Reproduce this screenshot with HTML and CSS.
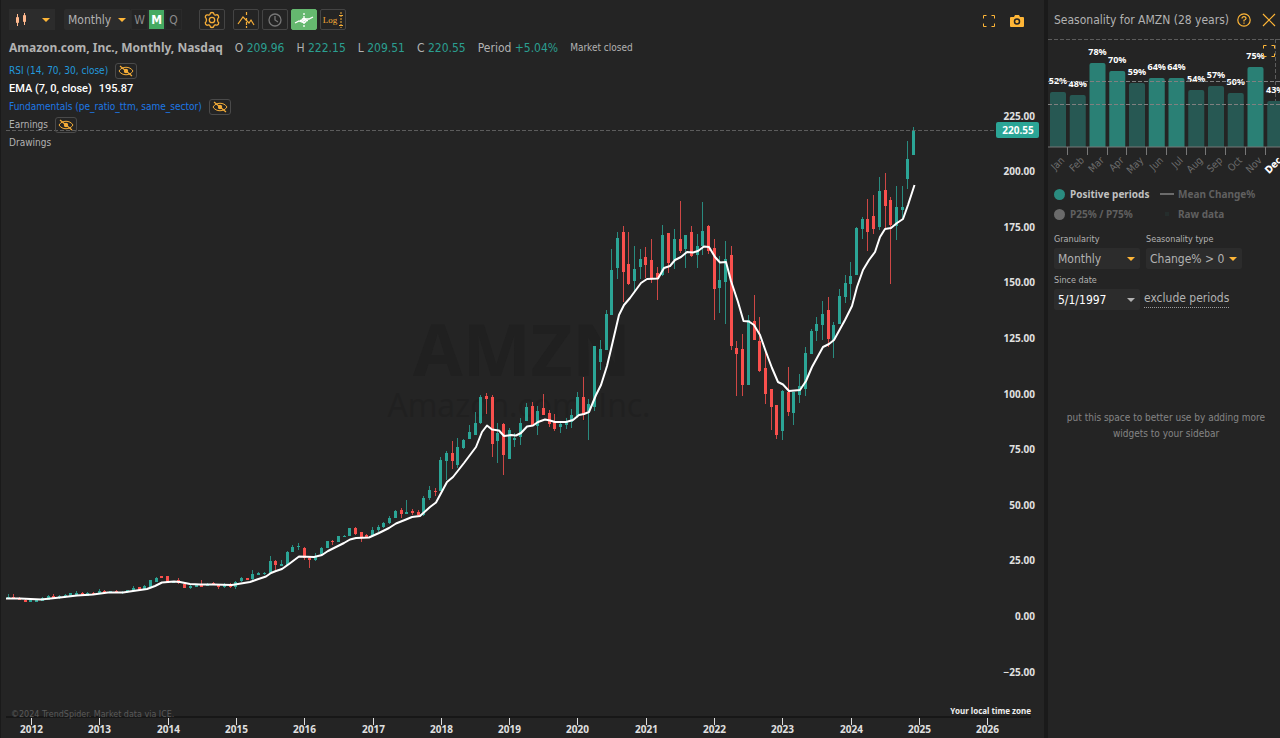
FILE: index.html
```html
<!DOCTYPE html>
<html lang="en">
<head>
<meta charset="utf-8">
<title>AMZN Monthly</title>
<link rel="stylesheet" href="styles.css">
</head>
<body>
<svg class="defs" aria-hidden="true">
  <symbol id="eye-off" viewBox="0 0 16 12">
    <path d="M1 6C4 1 12 1 15 6C12 11 4 11 1 6Z" fill="none" stroke="currentColor"/>
    <circle cx="8" cy="6" r="2.2" fill="currentColor"/>
    <path d="M2 1L14 11" stroke="currentColor" stroke-width="1.2"/>
  </symbol>
  <symbol id="expand" viewBox="0 0 14 14">
    <path d="M1.500 4.500V1.500H4.500M9.500 1.500h3v3M12.500 9.500v3H9.500M4.500 12.500H1.500V9.500" fill="none" stroke="currentColor"/>
  </symbol>
</svg>
<div class="app">
  <main class="chart">
    <svg class="plot" id="plot" viewBox="0 0 1044 738" preserveAspectRatio="xMinYMin meet" role="img" aria-label="AMZN monthly candlestick chart">
      <text class="mark mark-symbol" x="522" y="376">AMZN</text>
      <text class="mark mark-name" x="519" y="417">Amazon.com, Inc.</text>
      <path class="guide" d="M6 130.5H997"/>
      <g id="candles"></g>
      <polyline id="ema" class="ema" points="6,598.5 20,598.5 41,599.5 60,597.5 77,595.5 93,594.5 108,592.5 123,592.5 133,591 147,589 155,586 162,582.5 174,581.5 180,582 190,584 200,584.5 213,584.5 232,585 241,583.5 250,582 257,579.5 266,576.5 271,573 276,571 282,569 289,564 299,556.5 314,557 322,555 328,551 344,543 350,539.5 356,538 369,537.5 379,533 389,528 396,523.5 406,519.5 412,517 420,516 430,507 436,502.5 447,482 453,477 464,463 476,447 482,432 487,425.5 492,429.5 499,430.5 504,436 511,435 516,435.5 521,433 527,426.5 533,425.5 538,422 545,419.5 550,420.5 555,422 566,422 573,420 579,415 584,414 589,412 596,395 601,385 607,366 612,345 619,315 624,305 630,298 641,283 647,279 658,278.5 664,268 670,266 675,260 681,257 687,252 693,252.5 698,251 704,246.5 709,247 715,257 720,262.5 726,262 731,281 738,302 743.5,321 749,321.5 754,325 760,335 766,352 772,368 778,382 783,384.5 789,391 800,390 806,381 812,367 823,347 829,344 834,340 845,320 852,306 857,287 863,270 869,260 875,252 880,237 885,229 891,228 897,223 903,219 908,205 914.5,185"/>
      <g id="prices" class="axis-price"></g>
      <rect class="tag" x="996" y="122" width="43" height="16" rx="2"/>
      <text class="tag-text" x="1018" y="134">220.55</text>
      <path class="baseline" d="M6 717H1031"/>
      <g id="years" class="axis-year"></g>
      <text class="copyright" x="11" y="717">©2024 TrendSpider. Market data via ICE.</text>
      <text class="zone" x="1031" y="714">Your local time zone</text>
    </svg>
    <div class="overlay">
      <header class="toolbar">
        <button class="btn kind" aria-label="Chart type">
          <svg width="14" height="14" viewBox="0 0 14 14" fill="#ffb98e" stroke="#ffb98e"><path d="M3.5 1v12M10.500 0v12"/><path d="M2.500 4.500h2v5h-2zM9.500 2.500h2v6h-2z"/></svg>
          <span class="caret"></span>
        </button>
        <div class="period">
          <span class="select-box"><select class="select" aria-label="Timeframe"><option>Monthly</option><option>Weekly</option></select></span>
          <button class="step">W</button><button class="step step-on">M</button><button class="step">Q</button>
        </div>
        <button class="tool tool-gear" aria-label="Settings"><svg width="18" height="18" viewBox="0 0 18 18" fill="none" stroke="currentColor" stroke-width="1.3" stroke-linejoin="round"><path d="M7 3.200Q7.200 1.500 9 1.500T11 3.200Q11.500 4.200 12.800 4Q14.500 3.300 15.400 4.900T14.900 7.400Q14 9 14.900 10.600Q16.300 11.600 15.400 13.100T12.800 14Q11.500 13.800 11 14.800Q10.800 16.500 9 16.500T7 14.800Q6.500 13.800 5.200 14Q3.500 14.700 2.600 13.100T3.100 10.600Q4 9 3.100 7.400Q1.700 6.400 2.600 4.900T5.200 4Q6.500 4.200 7 3.200Z"/><circle cx="9" cy="9" r="2.700"/></svg></button>
        <div class="tools">
          <button class="tool" aria-label="Extended line"><svg width="18" height="18" viewBox="0 0 18 18" fill="none" stroke="currentColor" stroke-width="1.200"><path d="M1 13L6 6l6 6 2-3 3 5"/><path d="M9.500 1v4M9.500 7v10" stroke-dasharray="3 1"/></svg></button>
          <button class="tool tool-mute" aria-label="Time"><svg width="16" height="16" viewBox="0 0 16 16" fill="none" stroke="currentColor" stroke-width="1.300"><circle cx="8" cy="8" r="6"/><path d="M8 4v4l3 2"/></svg></button>
          <button class="tool tool-on" aria-label="Crosshair"><svg width="20" height="18" viewBox="0 0 20 18" fill="none" stroke="currentColor" stroke-width="1.300"><path d="M1 12l4-2 3 1 4-3 3 0 4-2"/><path d="M10 2v14M6 9.500h8" stroke-dasharray="2 1"/><circle cx="10" cy="9.500" r="2"/></svg></button>
          <button class="tool tool-log" aria-label="Logarithmic scale">Log<svg width="4" height="16" viewBox="0 0 4 16" stroke="currentColor"><path d="M2 0v16" stroke-dasharray="2 1"/><path d="M0 3.500h4M0 13.500h4"/></svg></button>
        </div>
        <div class="corner">
          <button class="plain" aria-label="Full screen"><svg width="14" height="14"><use href="#expand"/></svg></button>
          <button class="plain" aria-label="Snapshot"><svg width="14" height="12" viewBox="0 0 14 12"><path d="M1 2h3l1-2h4l1 2h3q1 0 1 1v8q0 1-1 1H1q-1 0-1-1V3q0-1 1-1z" fill="currentColor"/><circle cx="7" cy="6.500" r="2.500" fill="none" stroke="#242424" stroke-width="1.500"/></svg></button>
        </div>
      </header>
      <div class="quote">
        <strong class="title">Amazon.com, Inc., Monthly, Nasdaq</strong>
        <span>O <b>209.96</b></span><span>H <b>222.15</b></span><span>L <b>209.51</b></span><span>C <b>220.55</b></span><span>Period <b>+5.04%</b></span><span class="state">Market closed</span>
      </div>
      <ul class="studies">
        <li class="rsi">RSI (14, 70, 30, close)<button class="eye" aria-label="Show RSI"><svg width="16" height="12"><use href="#eye-off"/></svg></button></li>
        <li class="avg">EMA (7, 0, close) <span>195.87</span></li>
        <li class="fund">Fundamentals (pe_ratio_ttm, same_sector)<button class="eye" aria-label="Show fundamentals"><svg width="16" height="12"><use href="#eye-off"/></svg></button></li>
        <li>Earnings<button class="eye" aria-label="Show earnings"><svg width="16" height="12"><use href="#eye-off"/></svg></button></li>
        <li>Drawings</li>
      </ul>
    </div>
  </main>
  <aside class="side">
    <header class="side-head">
      <h2 class="side-title">Seasonality for AMZN (28 years)</h2>
      <button class="plain" aria-label="Help"><svg width="14" height="14" viewBox="0 0 14 14" fill="none" stroke="currentColor" stroke-width="1.200"><circle cx="7" cy="7" r="6.200"/><path d="M5 5.600Q5 3.600 7 3.600T9 5.500Q9 6.600 7 7.300V8.500M7 9.500v1.200"/></svg></button>
      <button class="plain" aria-label="Close"><svg width="14" height="14" viewBox="0 0 14 14" stroke="currentColor" stroke-width="1.200"><path d="M1 1l12 12M13 1L1 13"/></svg></button>
    </header>
    <div class="season">
      <svg id="season" class="season-plot" viewBox="0 38 232 144" role="img" aria-label="Share of positive months">
        <path class="guide" d="M0 39.500H232M227.500 39v107"/>
        <g id="bars"></g>
        <path class="guide guide-light" d="M0 81.500H232M0 104.500H232"/>
        <path class="season-axis" d="M0 147H232"/>
        <g id="months"></g>
      </svg>
      <button class="plain season-expand" aria-label="Expand"><svg width="14" height="14"><use href="#expand"/></svg></button>
    </div>
    <div class="legend">
      <span class="key key-on"><i class="dot dot-on"></i>Positive periods</span>
      <span class="key"><i class="line"></i>Mean Change%</span>
      <span class="key"><i class="dot"></i>P25% / P75%</span>
      <span class="key"><i class="speck"></i>Raw data</span>
    </div>
    <form class="form">
      <div class="row">
        <label class="field field-a">Granularity<span class="select-box"><select class="select"><option>Monthly</option></select></span></label>
        <label class="field field-b">Seasonality type<span class="select-box"><select class="select"><option>Change% &gt; 0</option></select></span></label>
      </div>
      <div class="row row-end">
        <label class="field field-a">Since date<span class="select-box select-box-date"><select class="select"><option>5/1/1997</option></select></span></label>
        <a class="exclude" href="#">exclude periods</a>
      </div>
    </form>
    <p class="empty">put this space to better use by adding more widgets to your sidebar</p>
  </aside>
</div>
<script src="chart.js"></script>
</body>
</html>
```
FILE: styles.css
```css
* { box-sizing: border-box; }
body {
  margin: 0;
  background: #242424;
  color: #b2b2b2;
  font: 12px/16px "DejaVu Sans Condensed", "Noto Sans", sans-serif;
}
button, select { font: inherit; color: inherit; border: 0; padding: 0; background: none; }
svg { flex: none; }
.defs { position: absolute; width: 0; height: 0; }
.app { display: flex; min-height: 100vh; }

.chart { flex: 1; display: grid; min-width: 0; box-shadow: inset 1px 0 #1a1a1a; overflow: hidden; }
.plot, .overlay { grid-area: 1 / 1; }
.plot { width: 100%; height: auto; display: block; }
.overlay { z-index: 1; padding: 9px 0 0 9px; }

.mark { fill: #202020; text-anchor: middle; }
.mark-symbol { font: 700 72px "Open Sans", sans-serif; }
.mark-name { font: 32px "Open Sans", sans-serif; }
.guide { stroke: #5c5c5c; stroke-dasharray: 4 2; fill: none; }
.guide-light { stroke: #808080; }
.ema { fill: none; stroke: #fff; stroke-width: 2; stroke-linejoin: round; }
.up { fill: #2ba596; }
.down { fill: #f9504d; }
.wick { opacity: 0.8; }
.axis-price { fill: #e0e0e0; font: 700 10px "Noto Sans", sans-serif; text-anchor: end; }
.axis-year { fill: #e0e0e0; font: 700 10px "Noto Sans", sans-serif; text-anchor: middle; }
.axis-year path { stroke: #ddd; }
.tag { fill: #2ba596; }
.tag-text { fill: #fff; font: 700 10px "Noto Sans", sans-serif; text-anchor: middle; }
.baseline { stroke: #171717; stroke-width: 2; }
.copyright { fill: #5a5a5a; font: 8px "DejaVu Sans", sans-serif; }
.zone { fill: #eee; font: 700 8px "Noto Sans", sans-serif; text-anchor: end; }

.toolbar { display: flex; height: 21px; align-items: stretch; }
.btn { background: #2c2c2c; display: flex; align-items: center; gap: 14px; padding: 0 5px; }
.kind { width: 46px; }
.caret, .select-box::after {
  content: "";
  width: 0;
  border: 4px solid transparent;
  border-top: 4px solid #ffb637;
  border-bottom: 0;
}
.period { display: flex; margin-left: 9px; }
.period .select-box { width: 67px; height: 21px; }
.select-box { display: grid; background: #2c2c2c; border-radius: 2px; }
.select-box::after { grid-area: 1 / 1; justify-self: end; align-self: center; margin-right: 5px; pointer-events: none; }
.select { grid-area: 1 / 1; appearance: none; width: 100%; padding: 0 4px; outline: 0; }
.step { width: 17px; color: #8a8a8a; border: 1px solid #2a2a2a; }
.step-on { background: #45aa62; color: #fff; font-weight: 700; }
.tool {
  display: grid;
  place-items: center;
  width: 26px;
  border: 1px solid #444;
  border-radius: 2px;
  color: #f6ae38;
}
.tool-gear { margin-left: 17px; }
.tools { display: flex; gap: 3px; margin-left: 8px; }
.tool-mute { color: #777; }
.tool-on { color: #fff; background: #65b86f; border-color: #65b86f; }
.tool-log { display: flex; align-items: center; justify-content: center; gap: 2px; font: 9px "Liberation Serif", serif; }
.corner { display: flex; gap: 14px; margin: 3px 20px 0 auto; align-items: center; }
.plain { color: #ffb637; display: grid; place-items: center; }

.quote { display: flex; gap: 12px; margin-top: 10px; white-space: nowrap; }
.quote b { font-weight: 400; color: #2b9f91; }
.title { font: 700 12px/16px "Noto Sans", sans-serif; }
.state { font-size: 10px; }
.studies { list-style: none; margin: 6px 0 0; padding: 0; font-size: 10px; }
.studies li { display: flex; align-items: center; height: 18px; gap: 7px; }
.eye {
  display: grid;
  place-items: center;
  width: 22px;
  height: 16px;
  border: 1px solid #4a4a4a;
  border-radius: 3px;
  color: #f6ae38;
}
.rsi { color: #2299dc; }
.studies .avg { color: #fff; font: 500 11px/16px Roboto, sans-serif; }
.fund { color: #1d78e6; }

.side { flex: 0 0 236px; border-left: 4px solid #1a1a1a; overflow: hidden; }
.side-head { display: flex; align-items: center; gap: 11px; height: 38px; padding: 2px 4px 0 6px; }
.side-title { flex: 1; min-width: 0; margin: 0; font-size: 12px; font-weight: 400; white-space: nowrap; }
.season { position: relative; }
.season-plot { display: block; width: 100%; }
.season-expand { position: absolute; right: 4px; top: 6px; }
.bar { fill: #275853; }
.bar-on { fill: #2a8075; }
.pct { fill: #fff; font: 700 9px "Noto Sans", sans-serif; text-anchor: middle; }
.month { fill: #6c6c6c; font: 10px "DejaVu Sans Condensed", sans-serif; text-anchor: end; }
.month-now { fill: #fff; font-weight: 700; }
.season-axis { stroke: #777; }
.tick { stroke: #777; }

.legend { display: grid; grid-template-columns: 106px 1fr; row-gap: 4px; padding: 4px 0 0 6px; font: 700 10px/16px "Noto Sans", sans-serif; color: #606060; }
.key { display: flex; align-items: center; white-space: nowrap; }
.key-on { color: #c0c0c0; }
.dot { width: 11px; height: 11px; border-radius: 50%; background: #6b6b6b; margin-right: 5px; }
.dot-on { background: #2a8b7f; }
.line { width: 14px; height: 2px; background: #6b6b6b; margin-right: 4px; }
.speck { width: 4px; height: 4px; background: #252d2c; margin: 0 9px 0 5px; }
.form { padding: 8px 0 0 6px; }
.row { display: flex; gap: 6px; }
.row-end { align-items: flex-end; gap: 4px; }
.field { font: 9px/18px "DejaVu Sans Condensed", sans-serif; color: #b2b2b2; }
.field .select-box { font-size: 12px; line-height: 16px; height: 21px; margin-bottom: 2px; }
.field-a { width: 86px; }
.field-b { width: 96px; }
.field .select-box-date { color: #fff; }
.select-box-date::after { border-top-color: #b2b2b2; }
.exclude { color: inherit; text-decoration: none; border-bottom: 1px dotted #999; margin-bottom: 4px; line-height: 17px; }
.empty { margin: 98px 8px 0 12px; text-align: center; font-size: 10px; line-height: 16px; color: #858585; }
```
FILE: chart.js
```js
// One entry per month, Sep 2011 to Dec 2024: high, body top, body bottom, low, direction (1 up, 0 down)
const candles = `594 597 599 599 1;594 597 599 599 0;597 598 600 600 0;598 600 602 602 0
599 600 602 602 1;599 600 602 602 1;597 598 601 601 1;595 596 600 600 1;594 596 598 599 0;595 596 598 599 1;594 595 597 598 1;593 593 596 596 1;591 593 595 596 1;592 593 596 596 0;592 593 596 596 1;592 593 595 595 0
589 591 594 594 1;590 591 593 593 0;591 591 593 593 1;590 591 593 593 0;591 592 593 594 1;590 590 592 593 1;586 588 591 591 1;587 587 590 590 0;585 586 589 589 1;580 580 587 587 1;577 578 582 582 1;576 576 578 578 0
576 576 582 582 0;581 581 583 583 1;578 580 583 584 0;583 584 588 588 0;585 586 588 589 1;584 585 587 587 1;580 584 587 587 0;583 584 586 586 1;582 583 585 585 0;584 585 587 589 0;583 584 587 588 1;583 584 587 588 0
581 582 587 589 1;577 578 581 582 1;578 578 580 580 0;570 574 579 580 1;572 573 575 575 1;572 573 574 575 1;556 561 573 574 1;560 561 565 570 0;560 564 566 566 1;551 552 565 566 1;545 547 552 552 1;543 546 547 550 1
547 548 558 560 0;557 558 560 568 0;553 556 560 561 1;547 548 554 555 1;541 541 548 548 1;540 541 542 545 0;536 536 542 542 1;535 536 537 537 1;528 528 536 536 1;527 528 534 535 0;532 532 538 542 0;534 535 537 537 0
527 530 536 537 1;525 527 530 532 1;522 523 527 528 1;516 518 523 524 1;510 511 518 518 1;508 510 514 518 0;500 512 514 514 1;509 511 513 515 0;510 512 515 517 0;496 498 515 516 1;486 490 498 500 1;488 491 492 496 0
457 460 491 491 1;451 453 461 480 1;441 453 461 469 0;438 447 465 468 1;439 440 448 449 1;425 432 439 439 1;412 423 435 435 1;395 397 423 424 1;393 396 399 414 0;395 397 444 457 0;423 433 441 463 1;423 424 455 475 0
428 430 459 459 1;433 438 440 447 1;418 423 437 445 1;403 407 421 421 1;402 406 425 425 0;406 411 426 435 1;394 408 415 415 0;410 413 424 427 0;414 422 429 431 0;422 424 427 433 1;418 421 425 429 1;409 415 422 428 1
392 397 416 418 1;377 397 415 420 0;399 404 411 440 1;346 346 407 411 1;340 349 362 370 1;310 314 350 350 1;249 270 315 315 1;232 238 268 279 1;226 232 272 302 0;232 264 284 285 0;246 269 281 291 1;249 259 267 279 1
247 257 265 278 0;239 260 278 283 0;267 273 278 300 0;225 235 275 276 1;233 233 263 273 0;229 239 260 269 1;201 239 251 253 0;235 235 249 268 1;226 232 256 257 0;234 246 255 268 1;202 231 246 255 1;225 226 251 254 0
239 248 289 320 0;256 280 288 313 1;241 259 282 324 1;246 255 346 350 0;341 348 354 396 0;334 349 385 396 0;315 320 385 385 1;295 321 340 340 0;317 341 371 372 0;350 368 394 404 0;389 389 407 430 0;405 405 435 439 0
390 391 431 440 1;367 392 412 416 0;392 392 413 425 1;374 386 395 403 1;347 353 389 396 1;329 331 354 354 1;317 324 331 341 1;301 314 325 340 1;297 310 339 347 0;322 325 340 358 1;289 296 324 324 1;275 283 297 303 1
262 276 284 300 1;227 228 275 275 1;217 219 229 239 1;199 219 232 251 0;195 216 229 234 0;177 191 227 230 1;173 190 206 228 0;197 200 225 284 0;186 207 226 240 1;186 207 210 219 1;141 159 179 189 1;127 131 155 155 1`
  .split(/[;\n]/).map(row => row.trim().split(' ').map(Number));

const fill = (id, markup) => { document.getElementById(id).innerHTML = markup; };

fill('candles', candles.map(([high, top, bottom, low, up], i) => {
  const x = Math.round(913 - (candles.length - 1 - i) * 5.694) + 0.5;
  const tone = up ? 'up' : 'down';
  return `<rect class="wick ${tone}" x="${x - 0.5}" y="${high}" width="1" height="${low - high}"/>` +
    `<rect class="${tone}" x="${x - 1.5}" y="${top}" width="3" height="${Math.max(1, bottom - top)}"/>`;
}).join(''));

let prices = '';
for (let p = 225; p >= -25; p -= 25) {
  const label = p.toFixed(2).replace('-', '−');
  prices += `<text x="1035" y="${Math.round(620 - p * 2.224)}">${label}</text>`;
}
fill('prices', prices);

let years = '';
for (let y = 2012; y <= 2026; y++) {
  const x = Math.round(31 + (y - 2012) * 68.3);
  years += `<path d="M${x + 0.5} 718v7"/><text x="${x + 0.5}" y="733">${y}</text>`;
}
fill('years', years);

const season = [['Jan', 52, 92], ['Feb', 48, 95], ['Mar', 78, 63], ['Apr', 70, 71], ['May', 59, 83], ['Jun', 64, 78],
  ['Jul', 64, 78], ['Aug', 54, 90], ['Sep', 57, 86], ['Oct', 50, 93], ['Nov', 75, 67], ['Dec', 43, 101]];
let bars = '';
let months = '';
season.forEach(([name, pct, top], i) => {
  const x = 2 + i * 19.75;
  bars += `<path class="bar${pct > 60 ? ' bar-on' : ''}" d="M${x} 147V${top + 2}q0-2 2-2h12q2 0 2 2V147z"/>` +
    `<text class="pct" x="${x + 8}" y="${top - 8}">${pct}%</text>`;
  months += `<path class="tick" d="M${Math.round(x + 17) + 0.5} 147v8"/>` +
    `<text class="month${name === 'Dec' ? ' month-now' : ''}" transform="translate(${x + 15} 161) rotate(-45)">${name}</text>`;
});
fill('bars', bars);
fill('months', months);
```
